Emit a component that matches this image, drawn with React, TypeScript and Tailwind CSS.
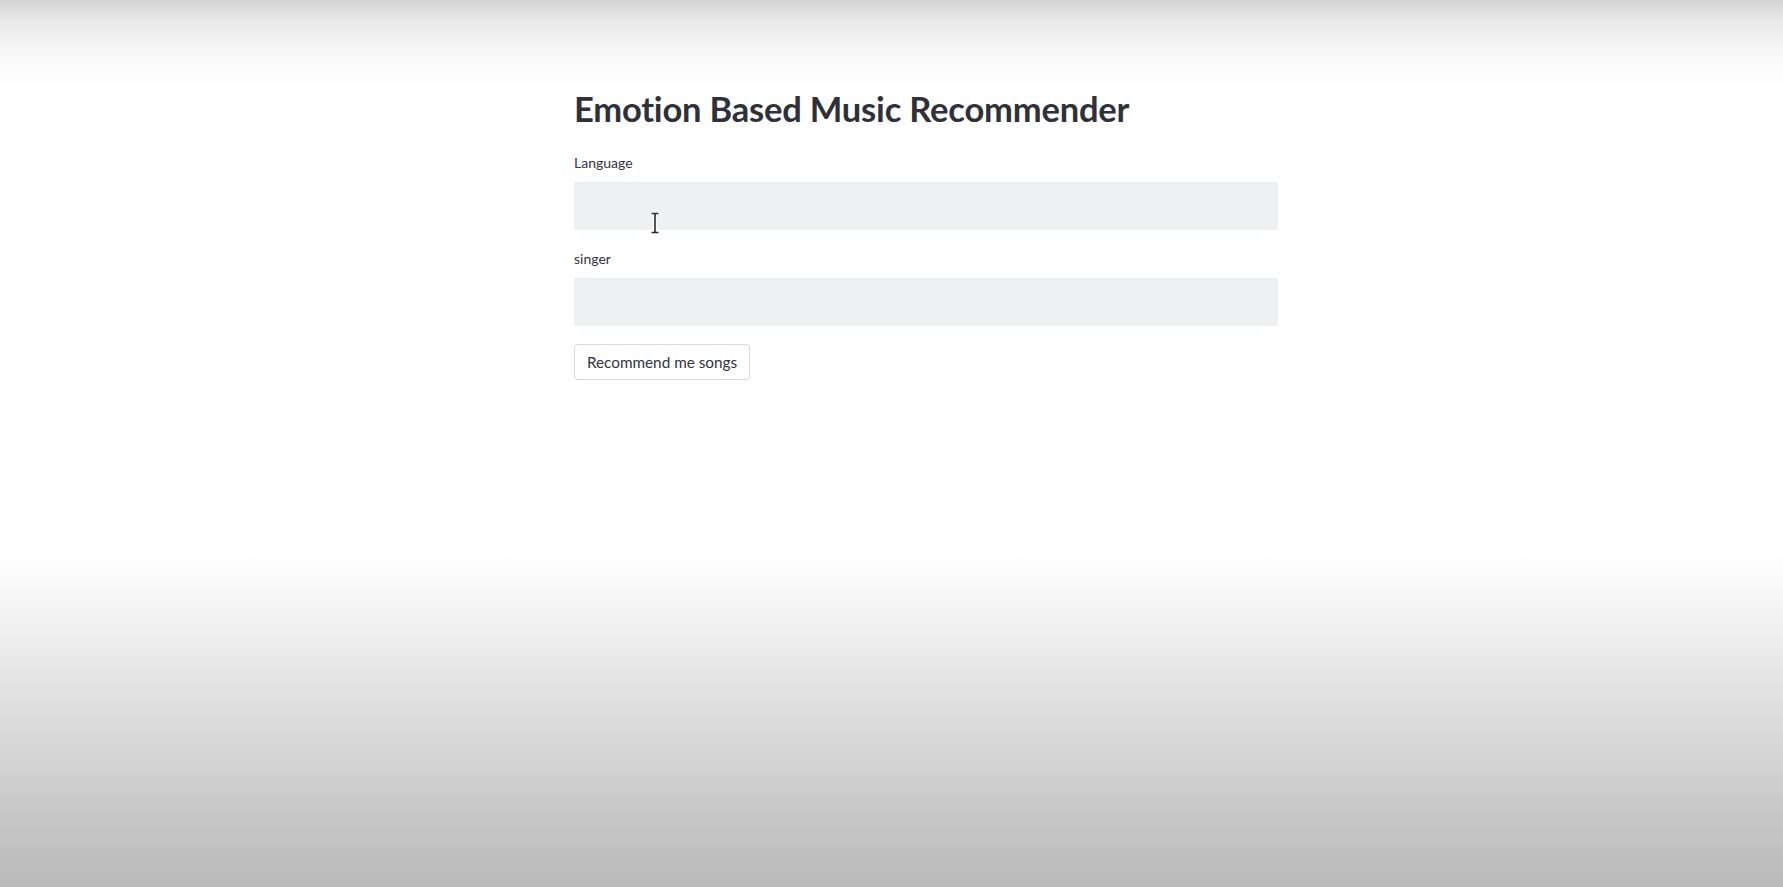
import React from "react";

const font = { fontFamily: '"Lato", "Open Sans", "Liberation Sans", sans-serif' };

function Cursor() {
  return (
    <svg
      className="absolute left-[649px] top-[211px] pointer-events-none"
      width="12"
      height="24"
      viewBox="0 0 12 24"
    >
      <path
        d="M2 2.5h8M2 21.5h8M6 2.5v19"
        stroke="#ffffff"
        strokeWidth="3.2"
        strokeLinecap="round"
        fill="none"
      />
      <path
        d="M2.5 2.5h7M2.5 21.5h7M6 2.5v19"
        stroke="#2a2a2a"
        strokeWidth="1.6"
        fill="none"
      />
    </svg>
  );
}

export default function App() {
  return (
    <div
      className="relative h-[887px] w-full overflow-hidden bg-[linear-gradient(to_bottom,#d5d5d5_0px,#e9e9e9_22px,#f4f4f4_45px,#fbfbfb_65px,#ffffff_88px,#ffffff_552px,#fbfbfb_575px,#f3f3f3_610px,#eeeeee_640px,#e6e6e6_667px,#e0e0e0_700px,#dadada_733px,#d2d2d2_767px,#cacaca_800px,#c4c4c4_833px,#bdbdbd_867px,#bbbbbb_887px)]"
      style={font}
    >
      <div className="ml-[574px] w-[704px] pt-[88px] flex flex-col text-[#31333f]">
        <h1 className="text-[34.5px] leading-[42px] font-bold tracking-[-0.2px] m-0 text-[#2f3038]">
          Emotion Based Music Recommender
        </h1>
        <label className="mt-[23px] text-[14px] leading-[20px]">Language</label>
        <div className="mt-[9px] h-[48px] w-[704px] bg-[#eef0f1] rounded-[2px]" />
        <label className="mt-[19px] text-[14px] leading-[20px]">singer</label>
        <div className="mt-[9px] h-[48px] w-[704px] bg-[#eef0f1] rounded-[2px]" />
        <div className="mt-[18px]">
          <button className="h-[36px] w-[176px] rounded-[4px] border border-[#d9d9d9] bg-white text-[15.3px] text-[#31333f] flex items-center justify-center">
            Recommend me songs
          </button>
        </div>
      </div>
      <Cursor />
    </div>
  );
}
